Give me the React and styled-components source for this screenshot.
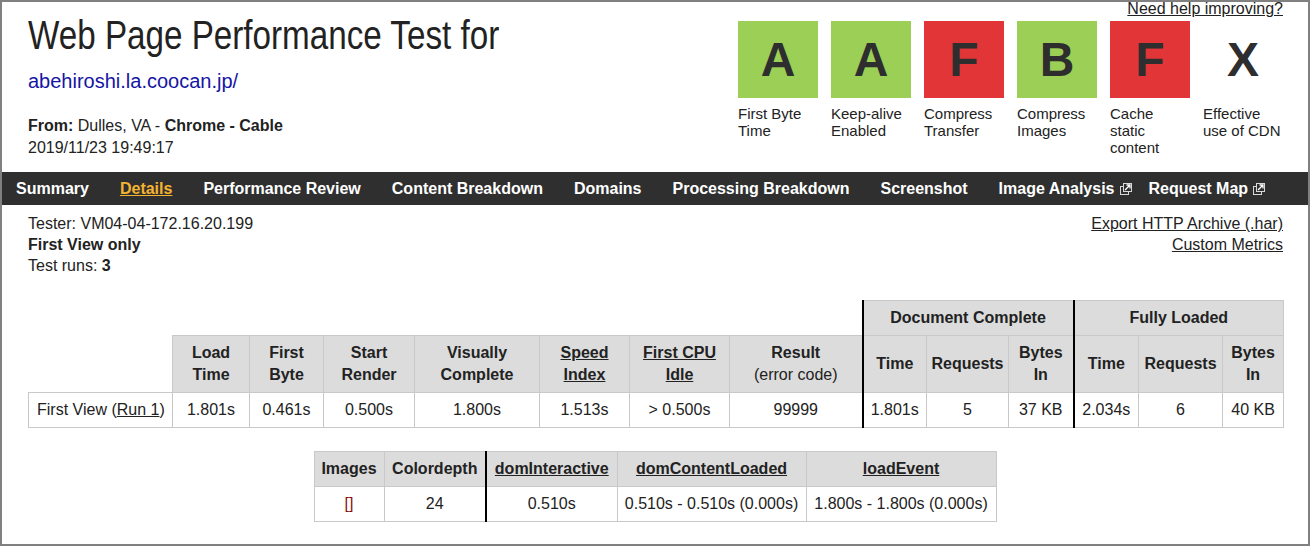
import React from "react";
import styled, { createGlobalStyle } from "styled-components";

const GlobalStyle = createGlobalStyle`
  html, body {
    margin: 0;
    padding: 0;
    background: #fff;
  }
  body {
    font-family: "Liberation Sans", Arial, sans-serif;
    font-size: 16px;
    color: #222;
  }
`;

const Frame = styled.div`
  box-sizing: border-box;
  width: 1310px;
  height: 546px;
  border: 2px solid #808080;
  overflow: hidden;
  background: #fff;
`;

/* ---------- header ---------- */

const Header = styled.header`
  display: flex;
  justify-content: space-between;
  align-items: flex-start;
  padding: 0 25px 13px 26px;
`;

const TestInfo = styled.div`
  padding-top: 10px;
`;

// the heading face is a condensed grotesque, squeeze the regular one to match
const Title = styled.h1`
  margin: 0;
  font-family: "Liberation Sans", Arial, sans-serif;
  font-weight: normal;
  font-size: 40px;
  line-height: 46px;
  color: #222;
  white-space: nowrap;
  transform: scaleX(0.83);
  transform-origin: left center;
`;

const SiteLink = styled.a`
  display: block;
  margin-top: 12px;
  font-size: 20px;
  line-height: 23px;
  color: #1515a3;
  text-decoration: none;
`;

const Meta = styled.div`
  margin-top: 22px;
  line-height: 22px;
`;

const GradeArea = styled.div`
  display: flex;
  flex-direction: column;
  align-items: flex-end;
  margin-top: -2px;
`;

const HelpLink = styled.a`
  line-height: 18px;
  color: #222;
  text-decoration: underline;
`;

const Grades = styled.ul`
  display: flex;
  gap: 13px;
  margin: 3px 0 0;
  padding: 0;
  list-style: none;
`;

const Grade = styled.li`
  width: 80px;
`;

const GradeBox = styled.div`
  display: flex;
  align-items: center;
  justify-content: center;
  height: 77px;
  background: ${(p) => p.$bg};
  font-weight: bold;
  font-size: 48px;
  color: #2e2e2e;
`;

const GradeLabel = styled.div`
  margin-top: 7px;
  font-size: 15px;
  line-height: 17px;
`;

/* ---------- nav ---------- */

const Nav = styled.nav`
  display: flex;
  align-items: center;
  gap: 31px;
  height: 33px;
  padding-left: 14px;
  background: #2f2f2f;
`;

const NavLink = styled.a`
  display: flex;
  align-items: center;
  font-weight: bold;
  font-size: 16px;
  line-height: 33px;
  white-space: nowrap;
  color: ${(p) => (p.$active ? "#f5b331" : "#fff")};
  text-decoration: ${(p) => (p.$active ? "underline" : "none")};
`;

const ExtMark = styled.svg`
  margin: 0 -14px 0 5px;
  flex: none;
`;

/* ---------- run info ---------- */

const InfoRow = styled.div`
  display: flex;
  justify-content: space-between;
  padding: 8px 25px 0 26px;
  line-height: 21px;
`;

const Downloads = styled.div`
  display: flex;
  flex-direction: column;
  align-items: flex-end;
`;

const PlainLink = styled.a`
  color: #222;
  text-decoration: underline;
`;

/* ---------- tables ---------- */

const TableWrap = styled.div`
  padding: ${(p) => p.$pad};
`;

const Table = styled.table`
  border-collapse: collapse;
  table-layout: fixed;
  width: ${(p) => p.$width}px;
  margin: ${(p) => (p.$center ? "0 auto" : "0")};
`;

const Col = styled.col`
  width: ${(p) => p.$w}px;
`;

const Th = styled.th`
  padding: 6px 4px;
  border: 1px solid #c9c9c9;
  ${(p) => p.$divider && "border-left: 2px solid #000;"}
  background: #dcdcdc;
  font-weight: bold;
  line-height: 22px;
  text-align: center;
  vertical-align: middle;
`;

const Td = styled.td`
  padding: 6px 4px;
  border: 1px solid #c9c9c9;
  ${(p) => p.$divider && "border-left: 2px solid #000;"}
  line-height: 22px;
  text-align: ${(p) => (p.$left ? "left" : "center")};
  ${(p) => p.$left && "padding-left: 8px;"}
  white-space: nowrap;
`;

const Blank = styled.td`
  border: none;
  padding: 0;
`;

const HeadLink = styled.a`
  color: #222;
  text-decoration: underline;
`;

const Light = styled.span`
  font-weight: normal;
`;

const ImageLink = styled.a`
  color: #8a1010;
  text-decoration: none;
`;

const grades = [
  { letter: "A", bg: "#9bcf56", label: "First Byte Time" },
  { letter: "A", bg: "#9bcf56", label: "Keep-alive Enabled" },
  { letter: "F", bg: "#e23538", label: "Compress Transfer" },
  { letter: "B", bg: "#9bcf56", label: "Compress Images" },
  { letter: "F", bg: "#e23538", label: "Cache static content" },
  { letter: "X", bg: "transparent", label: "Effective use of CDN" },
];

const navItems = [
  { label: "Summary" },
  { label: "Details", active: true },
  { label: "Performance Review" },
  { label: "Content Breakdown" },
  { label: "Domains" },
  { label: "Processing Breakdown" },
  { label: "Screenshot" },
  { label: "Image Analysis", external: true },
  { label: "Request Map", external: true },
];

const ExternalIcon = () => (
  <ExtMark width="12" height="12" viewBox="0 0 12 12">
    <rect x="0.5" y="3.5" width="8" height="8" fill="none" stroke="#d8d8d8" />
    <rect x="3.5" y="0.5" width="8" height="8" fill="#2f2f2f" stroke="#d8d8d8" />
    <path d="M5 7 L10 2 M6.5 2 H10 V5.5" fill="none" stroke="#fff" strokeWidth="1.3" />
  </ExtMark>
);

const mainCols = [144, 77, 74, 91, 125, 90, 100, 133, 64, 82, 65, 65, 84, 61];
const extraCols = [70, 102, 131, 189, 190];

export default function App() {
  return (
    <>
      <GlobalStyle />
      <Frame>
        <Header>
          <TestInfo>
            <Title>Web Page Performance Test for</Title>
            <SiteLink href="#">abehiroshi.la.coocan.jp/</SiteLink>
            <Meta>
              <b>From:</b> Dulles, VA - <b>Chrome - Cable</b>
              <br />
              2019/11/23 19:49:17
            </Meta>
          </TestInfo>
          <GradeArea>
            <HelpLink href="#">Need help improving?</HelpLink>
            <Grades>
              {grades.map((g) => (
                <Grade key={g.label}>
                  <GradeBox $bg={g.bg}>{g.letter}</GradeBox>
                  <GradeLabel>{g.label}</GradeLabel>
                </Grade>
              ))}
            </Grades>
          </GradeArea>
        </Header>

        <Nav>
          {navItems.map((n) => (
            <NavLink key={n.label} href="#" $active={n.active}>
              {n.label}
              {n.external && <ExternalIcon />}
            </NavLink>
          ))}
        </Nav>

        <InfoRow>
          <div>
            Tester: VM04-04-172.16.20.199
            <br />
            <b>First View only</b>
            <br />
            Test runs: <b>3</b>
          </div>
          <Downloads>
            <PlainLink href="#">Export HTTP Archive (.har)</PlainLink>
            <PlainLink href="#">Custom Metrics</PlainLink>
          </Downloads>
        </InfoRow>

        <TableWrap $pad="24px 25px 0 26px">
          <Table $width={1255}>
            <colgroup>
              {mainCols.map((w, i) => (
                <Col key={i} $w={w} />
              ))}
            </colgroup>
            <thead>
              <tr>
                <Blank colSpan={8} />
                <Th colSpan={3} $divider>Document Complete</Th>
                <Th colSpan={3} $divider>Fully Loaded</Th>
              </tr>
              <tr>
                <Blank />
                <Th>Load Time</Th>
                <Th>First Byte</Th>
                <Th>Start Render</Th>
                <Th>Visually Complete</Th>
                <Th>
                  <HeadLink href="#">Speed Index</HeadLink>
                </Th>
                <Th>
                  <HeadLink href="#">First CPU Idle</HeadLink>
                </Th>
                <Th>
                  Result
                  <br />
                  <Light>(error code)</Light>
                </Th>
                <Th $divider>Time</Th>
                <Th>Requests</Th>
                <Th>Bytes In</Th>
                <Th $divider>Time</Th>
                <Th>Requests</Th>
                <Th>Bytes In</Th>
              </tr>
            </thead>
            <tbody>
              <tr>
                <Td $left>
                  First View (<PlainLink href="#">Run 1</PlainLink>)
                </Td>
                <Td>1.801s</Td>
                <Td>0.461s</Td>
                <Td>0.500s</Td>
                <Td>1.800s</Td>
                <Td>1.513s</Td>
                <Td>&gt; 0.500s</Td>
                <Td>99999</Td>
                <Td $divider>1.801s</Td>
                <Td>5</Td>
                <Td>37 KB</Td>
                <Td $divider>2.034s</Td>
                <Td>6</Td>
                <Td>40 KB</Td>
              </tr>
            </tbody>
          </Table>
        </TableWrap>

        <TableWrap $pad="23px 0 0">
          <Table $width={682} $center>
            <colgroup>
              {extraCols.map((w, i) => (
                <Col key={i} $w={w} />
              ))}
            </colgroup>
            <thead>
              <tr>
                <Th>Images</Th>
                <Th>Colordepth</Th>
                <Th $divider>
                  <HeadLink href="#">domInteractive</HeadLink>
                </Th>
                <Th>
                  <HeadLink href="#">domContentLoaded</HeadLink>
                </Th>
                <Th>
                  <HeadLink href="#">loadEvent</HeadLink>
                </Th>
              </tr>
            </thead>
            <tbody>
              <tr>
                <Td>
                  <ImageLink href="#">[]</ImageLink>
                </Td>
                <Td>24</Td>
                <Td $divider>0.510s</Td>
                <Td>0.510s - 0.510s (0.000s)</Td>
                <Td>1.800s - 1.800s (0.000s)</Td>
              </tr>
            </tbody>
          </Table>
        </TableWrap>
      </Frame>
    </>
  );
}
